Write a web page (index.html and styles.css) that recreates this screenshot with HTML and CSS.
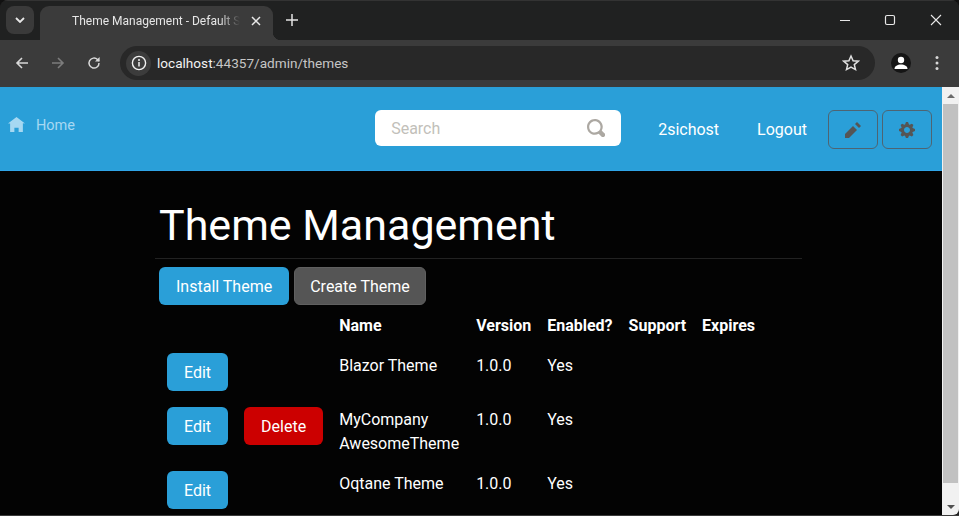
FILE: index.html

```html
<!DOCTYPE html>
<html lang="en">
<head>
  <meta charset="UTF-8" />
  <meta name="viewport" content="width=device-width, initial-scale=1.0"/>
  <title>Theme Management - Default Site</title>
  <link rel="stylesheet" href="styles.css">
</head>
<body>
<div class="window">

  <div class="tabstrip">
    <div class="tab-list-btn">
      <svg width="10" height="6" viewBox="0 0 10 6"><path d="M1 1l4 4 4-4" fill="none" stroke="#e8e8e8" stroke-width="1.8"/></svg>
    </div>
    <div class="tab">
      <span class="tab-title">Theme Management - Default Site</span>
      <svg class="tab-close" width="10" height="10" viewBox="0 0 10 10"><path d="M1 1l8 8M9 1l-8 8" stroke="#e8e8e8" stroke-width="1.5"/></svg>
    </div>
    <svg class="new-tab" width="12" height="12" viewBox="0 0 12 12"><path d="M6 0v12M0 6h12" stroke="#e4e4e4" stroke-width="1.5"/></svg>
    <div class="win-controls">
      <svg width="12" height="12" viewBox="0 0 12 12"><path d="M1 6.5h10" stroke="#e8e8e8" stroke-width="1.2"/></svg>
      <svg width="12" height="12" viewBox="0 0 12 12"><rect x="1.5" y="1.5" width="9" height="9" rx="1.5" fill="none" stroke="#e8e8e8" stroke-width="1.2"/></svg>
      <svg width="12" height="12" viewBox="0 0 12 12"><path d="M1 1l10 10M11 1L1 11" stroke="#e8e8e8" stroke-width="1.1"/></svg>
    </div>
  </div>

  <div class="toolbar">
    <svg class="tool" width="16" height="16" viewBox="0 0 16 16"><path d="M14 8H3M8 3L3 8l5 5" fill="none" stroke="#d8d8d8" stroke-width="1.6"/></svg>
    <svg class="tool" width="16" height="16" viewBox="0 0 16 16"><path d="M2 8h11M8 3l5 5-5 5" fill="none" stroke="#7c7c7c" stroke-width="1.6"/></svg>
    <svg class="tool" width="16" height="16" viewBox="0 0 16 16"><path d="M13 8a5 5 0 1 1-1.5-3.500L13 6" fill="none" stroke="#d8d8d8" stroke-width="1.5"/><path d="M13.600 2v4.600H9z" fill="#d8d8d8"/></svg>
    <div class="address">
      <div class="site-info">
        <svg width="16" height="16" viewBox="0 0 16 16"><circle cx="8" cy="8" r="6.600" fill="none" stroke="#f0f0f0" stroke-width="1.4"/><path d="M8 7v4.400" stroke="#f0f0f0" stroke-width="1.5"/><circle cx="8" cy="4.900" r="1" fill="#f0f0f0"/></svg>
      </div>
      <span class="url">localhost<span class="url-path">:44357/admin/themes</span></span>
      <svg class="star" width="18" height="18" viewBox="0 0 18 18"><path d="M9 2l2.100 4.700 5.100.5-3.900 3.400 1.200 5L9 13l-4.500 2.600 1.200-5-3.900-3.400 5.100-.5z" fill="none" stroke="#e0e0e0" stroke-width="1.5"/></svg>
    </div>
    <div class="avatar">
      <svg width="14" height="14" viewBox="0 0 14 14"><circle cx="7" cy="4" r="3.200" fill="#fff"/><path d="M0.500 13c0-3 3-4.600 6.500-4.600s6.500 1.600 6.500 4.600z" fill="#fff"/></svg>
    </div>
    <svg class="menu-dots" width="4" height="16" viewBox="0 0 4 16"><circle cx="2" cy="2.500" r="1.500" fill="#d8d8d8"/><circle cx="2" cy="8" r="1.500" fill="#d8d8d8"/><circle cx="2" cy="13.500" r="1.500" fill="#d8d8d8"/></svg>
  </div>

  <div class="viewport">
    <div class="page">
      <nav class="navbar">
        <a class="home-link">
          <svg width="17" height="17" viewBox="0 0 8 8"><path fill="#a6d8f2" d="M4 0l-4 3h1v4h2v-2h2v2h2v-4.030l1 .030-4-3z"/></svg>
          <span>Home</span>
        </a>
        <div class="search">
          <input type="text" placeholder="Search">
          <svg width="18" height="18" viewBox="0 0 8 8"><path fill="#aca8a2" d="M3.500 0c-1.930 0-3.500 1.570-3.500 3.500s1.570 3.500 3.500 3.500c.59 0 1.170-.14 1.660-.41a1 1 0 0 0 .13.130l1 1a1.020 1.020 0 1 0 1.440-1.440l-1-1a1 1 0 0 0-.16-.13c.27-.49.44-1.060.44-1.660 0-1.930-1.570-3.500-3.500-3.500zm0 1c1.390 0 2.500 1.110 2.500 2.500 0 .66-.24 1.270-.66 1.720-.01.01-.02.020-.030.030a1 1 0 0 0-.13.130c-.44.400-1.040.63-1.690.63-1.390 0-2.500-1.110-2.500-2.500s1.110-2.500 2.500-2.500z"/></svg>
        </div>
        <a class="nav-link user-link">2sichost</a>
        <a class="nav-link logout-link">Logout</a>
        <button class="icon-btn edit-btn" type="button">
          <svg width="16" height="16" viewBox="0 0 8 8"><path fill="#555" d="M6 0l-1 1 2 2 1-1-2-2zm-2 2l-4 4v2h2l4-4-2-2z"/></svg>
        </button>
        <button class="icon-btn" type="button">
          <svg width="16" height="16" viewBox="0 0 8 8"><path fill="#555" d="M3.500 0l-.5 1.190c-.1.030-.19.080-.28.130l-1.190-.5-.72.720.5 1.190c-.050.1-.090.180-.130.280l-1.190.5v1l1.190.5c.040.1.080.180.130.280l-.5 1.190.72.72 1.190-.5c.090.040.18.090.28.130l.5 1.190h1l.5-1.190c.090-.040.19-.080.28-.130l1.190.5.72-.72-.5-1.190c.040-.090.090-.19.130-.28l1.190-.5v-1l-1.190-.5c-.030-.090-.080-.19-.130-.28l.5-1.190-.72-.72-1.190.5c-.090-.040-.19-.090-.28-.130l-.5-1.190h-1zm.5 2.500c.83 0 1.500.67 1.500 1.500s-.67 1.500-1.500 1.500-1.500-.67-1.500-1.500.67-1.500 1.500-1.500z"/></svg>
        </button>
      </nav>

      <main class="content">
        <h1 class="page-title">Theme Management</h1>
        <div class="actions">
          <button class="btn btn-primary" type="button">Install Theme</button>
          <button class="btn btn-secondary" type="button">Create Theme</button>
        </div>
        <table class="themes">
          <thead>
            <tr>
              <th></th>
              <th></th>
              <th>Name</th>
              <th>Version</th>
              <th>Enabled?</th>
              <th>Support</th>
              <th>Expires</th>
            </tr>
          </thead>
          <tbody>
            <tr>
              <td><button class="btn btn-primary" type="button">Edit</button></td>
              <td></td>
              <td>Blazor Theme</td>
              <td>1.0.0</td>
              <td>Yes</td>
              <td></td>
              <td></td>
            </tr>
            <tr>
              <td><button class="btn btn-primary" type="button">Edit</button></td>
              <td><button class="btn btn-danger" type="button">Delete</button></td>
              <td>MyCompany<br>AwesomeTheme</td>
              <td>1.0.0</td>
              <td>Yes</td>
              <td></td>
              <td></td>
            </tr>
            <tr>
              <td><button class="btn btn-primary" type="button">Edit</button></td>
              <td></td>
              <td>Oqtane Theme</td>
              <td>1.0.0</td>
              <td>Yes</td>
              <td></td>
              <td></td>
            </tr>
          </tbody>
        </table>
      </main>
    </div>

    <div class="scrollbar">
      <div class="scroll-arrow"><span class="arrow-up"></span></div>
      <div class="scroll-track"><div class="scroll-thumb"></div></div>
      <div class="scroll-arrow"><span class="arrow-down"></span></div>
    </div>
  </div>

</div>
</body>
</html>
```

FILE: styles.css

```css
* { box-sizing: border-box; }
html, body { margin: 0; height: 100%; overflow: hidden; background: #111; }
body { font-family: "Roboto", "Liberation Sans", sans-serif; font-size: 16px; line-height: 24px; color: #fff; }

.window { display: flex; flex-direction: column; width: 959px; height: 516px; overflow: hidden; background: #202020; border-radius: 8px 8px 0 0; border-bottom: 1px solid #3a3a3a; }

/* browser frame */
.tabstrip { display: flex; align-items: flex-end; height: 40px; padding-left: 6px; background: #202121; border-top: 1px solid #333; }
.tab-list-btn { display: flex; align-items: center; justify-content: center; align-self: flex-start; width: 28px; height: 28px; margin-top: 5px; border-radius: 8px; background: #3a3a3a; }
.tab { position: relative; display: flex; align-items: center; width: 233px; height: 34px; margin-left: 6px; padding: 0 0 5px 32px; border-radius: 9px 9px 0 0; background: #3b3b3b; }
.tab::after { content: ""; position: absolute; right: -8px; bottom: 0; width: 8px; height: 8px; background: radial-gradient(circle at 100% 0, transparent 8px, #3b3b3b 8.500px); }
.tab-title { width: 168px; overflow: hidden; white-space: nowrap; font-size: 12px; line-height: 16px; color: #e6e6e6; -webkit-mask-image: linear-gradient(to right, #000 88%, transparent 100%); mask-image: linear-gradient(to right, #000 88%, transparent 100%); }
.tab-close { margin-left: 11px; }
.new-tab { align-self: flex-start; margin: 13px 0 0 13px; }
.win-controls { display: flex; align-self: flex-start; gap: 33px; margin: 13px 17px 0 auto; }
.win-controls svg:last-child { margin-left: 1px; }

.toolbar { display: flex; align-items: center; height: 47px; padding: 0 0 1px 14px; background: #3b3b3b; }
.tool { margin-right: 20px; }
.tool:nth-child(3) { margin-right: 18px; }
.address { display: flex; align-items: center; width: 755px; height: 34px; padding: 0 15px 0 6px; border-radius: 17px; background: #282828; }
.site-info { display: flex; align-items: center; justify-content: center; width: 25px; height: 25px; border-radius: 50%; background: #3c3c3c; }
.url { margin-left: 6px; font-size: 13.600px; color: #f2f2f2; }
.url-path { color: #c6c6c6; }
.star { margin-left: auto; }
.avatar { display: flex; align-items: center; justify-content: center; width: 20px; height: 20px; margin-left: 16px; border-radius: 50%; background: #151515; }
.menu-dots { margin-left: 24px; }

.viewport { display: flex; flex: 1; min-height: 0; }
.page { flex: 1; min-width: 0; overflow: hidden; background: #030303; }

/* site nav */
.navbar { display: flex; align-items: flex-start; height: 84px; padding: 23px 10px 0 8px; background: #2a9fd8; border-bottom: 1px solid #2fa4e7; }
.home-link { display: flex; align-items: center; gap: 11px; height: 30px; padding-top: 1px; font-size: 14.500px; color: #a6d8f2; }
.search { display: flex; align-items: center; width: 246px; height: 36px; margin-left: auto; padding: 0 16px; border-radius: 6px; background: #fff; }
.search input { flex: 1; min-width: 0; padding: 0; border: none; outline: none; background: transparent; font-family: inherit; font-size: 16px; }
.search input::placeholder { color: #c2bfba; opacity: 1; }
.nav-link { margin-top: 8px; color: #fff; }
.user-link { margin-left: 37px; }
.logout-link { margin-left: 38px; margin-right: 21px; }
.icon-btn { display: flex; align-items: center; justify-content: center; width: 50px; height: 39px; padding: 0; border: 1px solid #4e6472; border-radius: 6px; background: transparent; }
.edit-btn { margin-right: 4px; }

/* page body */
.content { width: 647px; margin-left: 155px; padding-top: 30px; }
.page-title { margin: 0 0 8px; padding: 0 4px 9px; border-bottom: 1px solid #222; font-size: 43px; font-weight: 400; line-height: 48px; }
.actions { display: flex; gap: 5px; padding-left: 4px; }

.btn { height: 38px; padding: 0 16px; border: 1px solid transparent; border-radius: 6px; font-family: inherit; font-size: 16px; color: #fff; }
.btn-primary { background: #2a9fd8; }
.btn-secondary { padding: 0 15px; background: #555; border-color: #606060; }
.btn-danger { background: #c00; }

.themes { margin-left: 4px; border-collapse: collapse; }
.themes th, .themes td { padding: 8px; vertical-align: top; text-align: left; }
.themes th { padding: 9px 8px 7px; font-weight: 700; }
.themes td:nth-child(n+3) { padding: 9px 8px 7px; }
.themes th:nth-child(3), .themes td:nth-child(3) { padding-right: 9px; }

/* scrollbar */
.scrollbar { display: flex; flex-direction: column; width: 17px; background: #f1f1f1; border-bottom-right-radius: 6px; }
.scroll-arrow { display: flex; align-items: center; justify-content: center; height: 17px; }
.scroll-track { flex: 1; padding: 0 1px; }
.scroll-thumb { height: 379px; background: #c1c1c1; }
.arrow-up { width: 0; height: 0; border: 4px solid transparent; border-top: 0; border-bottom: 4px solid #6a6a6a; }
.arrow-down { width: 0; height: 0; border: 4px solid transparent; border-bottom: 0; border-top: 4px solid #505050; }
```
